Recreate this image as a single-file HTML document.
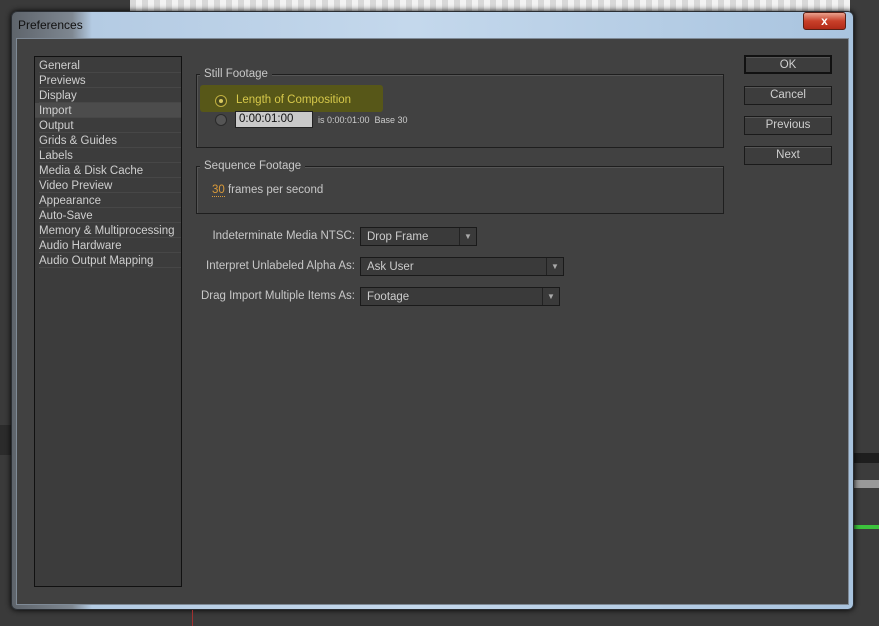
<!DOCTYPE html>
<html><head><style>
*{margin:0;padding:0;box-sizing:border-box}
body{width:879px;height:626px;overflow:hidden;background:#3a3a3a;position:relative;font-family:"Liberation Sans",sans-serif;font-size:11.5px;color:#c8c8c8}
.a{position:absolute}
.chk{left:130px;top:0;width:720px;height:12px;background:repeating-linear-gradient(90deg,#d8d8d8 0 6px,#f2f2f2 6px 12px)}
.frame{left:11px;top:11px;width:843px;height:599px;border-radius:6px;background:linear-gradient(90deg,#5e646b 0,#7e8791 60px,#b4cbe3 80px,#c4d8ec 400px,#a9c4df 840px);border:1px solid #2a2e33;box-shadow:0 0 6px #000}
.inner{left:16px;top:38px;width:833px;height:567px;background:#414141;border:1px solid #7f8a96}
.list{left:34px;top:56px;width:148px;height:531px;background:#3c3c3c;border:1px solid #111}
.it{position:absolute;left:4px;width:142px;height:15px;line-height:16px;color:#cfcfcf;font-size:11.5px;border-bottom:1px solid #474747}
.grp{border:1px solid #1e1e1e;box-shadow:1px 1px 0 #555 inset}
.btn{left:744px;width:88px;height:19px;border:1px solid #1a1a1a;background:#3d3d3d;color:#d0d0d0;text-align:center;line-height:17px;font-size:11.5px;box-shadow:inset 0 1px 0 #555}
.dd{height:19px;background:#3a3a3a;border:1px solid #1a1a1a;color:#ccc;line-height:18px;padding-left:6px;font-size:11.5px}
.arr{position:absolute;right:0;top:0;width:17px;height:17px;border-left:1px solid #222;text-align:center;color:#aaa;font-size:8px;line-height:17px}
.lab{text-align:right;font-size:11.5px;color:#c8c8c8}
</style></head><body>
<div class="a chk"></div>
<div class="a" style="left:850px;top:0;width:29px;height:626px;background:#3c3c3c"></div>
<div class="a" style="left:854px;top:453px;width:25px;height:10px;background:#1e1e1e"></div>
<div class="a" style="left:854px;top:480px;width:25px;height:8px;background:#999"></div>
<div class="a" style="left:854px;top:525px;width:25px;height:4px;background:#3cc23c"></div>
<div class="a" style="left:0;top:425px;width:11px;height:30px;background:#2b2b2b"></div>
<div class="a frame"></div>
<div class="a" style="left:18px;top:18px;font-size:12px;color:#111">Preferences</div>
<div class="a" style="left:803px;top:12px;width:43px;height:18px;border-radius:3px;background:linear-gradient(#e9a28f,#c8402a 50%,#b02a18);border:1px solid #5a1f15;color:#fff;text-align:center;font-weight:bold;font-size:12px;line-height:16px">x</div>
<div class="a inner"></div>
<div class="a list">
<div class="it" style="top:1px">General</div>
<div class="it" style="top:16px">Previews</div>
<div class="it" style="top:31px">Display</div>
<div class="it" style="top:46px;left:0;width:146px;padding-left:4px;background:#4c4c4c">Import</div>
<div class="it" style="top:61px">Output</div>
<div class="it" style="top:76px">Grids &amp; Guides</div>
<div class="it" style="top:91px">Labels</div>
<div class="it" style="top:106px">Media &amp; Disk Cache</div>
<div class="it" style="top:121px">Video Preview</div>
<div class="it" style="top:136px">Appearance</div>
<div class="it" style="top:151px">Auto-Save</div>
<div class="it" style="top:166px">Memory &amp; Multiprocessing</div>
<div class="it" style="top:181px">Audio Hardware</div>
<div class="it" style="top:196px">Audio Output Mapping</div>
</div>
<div class="a grp" style="left:196px;top:74px;width:528px;height:74px"></div>
<div class="a" style="left:200px;top:68px;padding:0 4px;background:#414141">Still Footage</div>
<div class="a" style="left:200px;top:85px;width:183px;height:27px;background:#5a5a14;border-radius:3px;opacity:.9"></div>
<div class="a" style="left:215px;top:95px;width:12px;height:12px;border-radius:50%;border:1px solid #c0b040;background:#4a4a1a"></div>
<div class="a" style="left:219px;top:99px;width:4px;height:4px;border-radius:50%;background:#d8c860"></div>
<div class="a" style="left:236px;top:94px;color:#d6c84a">Length of Composition</div>
<div class="a" style="left:215px;top:114px;width:12px;height:12px;border-radius:50%;border:1px solid #2a2a2a;background:#555"></div>
<div class="a" style="left:235px;top:111px;width:78px;height:17px;background:#c9c9c9;border:1px solid #222;color:#111;line-height:15px;padding-left:3px">0:00:01:00</div>
<div class="a" style="left:318px;top:115px;font-size:9px;color:#ccc">is 0:00:01:00&nbsp; Base 30</div>
<div class="a grp" style="left:196px;top:166px;width:528px;height:48px"></div>
<div class="a" style="left:200px;top:160px;padding:0 4px;background:#414141">Sequence Footage</div>
<div class="a" style="left:212px;top:184px"><span style="color:#d99a3a;border-bottom:1px dotted #d99a3a">30</span> frames per second</div>
<div class="a lab" style="left:180px;width:175px;top:230px">Indeterminate Media NTSC:</div>
<div class="a dd" style="left:360px;top:227px;width:117px">Drop Frame<div class="arr">▼</div></div>
<div class="a lab" style="left:180px;width:175px;top:260px">Interpret Unlabeled Alpha As:</div>
<div class="a dd" style="left:360px;top:257px;width:204px">Ask User<div class="arr">▼</div></div>
<div class="a lab" style="left:175px;width:180px;top:290px">Drag Import Multiple Items As:</div>
<div class="a dd" style="left:360px;top:287px;width:200px">Footage<div class="arr">▼</div></div>
<div class="a btn" style="top:55px;border:2px solid #111">OK</div>
<div class="a btn" style="top:86px">Cancel</div>
<div class="a btn" style="top:116px">Previous</div>
<div class="a btn" style="top:146px">Next</div>
<div class="a" style="left:192px;top:610px;width:1px;height:16px;background:#a03030"></div>
</body></html>
